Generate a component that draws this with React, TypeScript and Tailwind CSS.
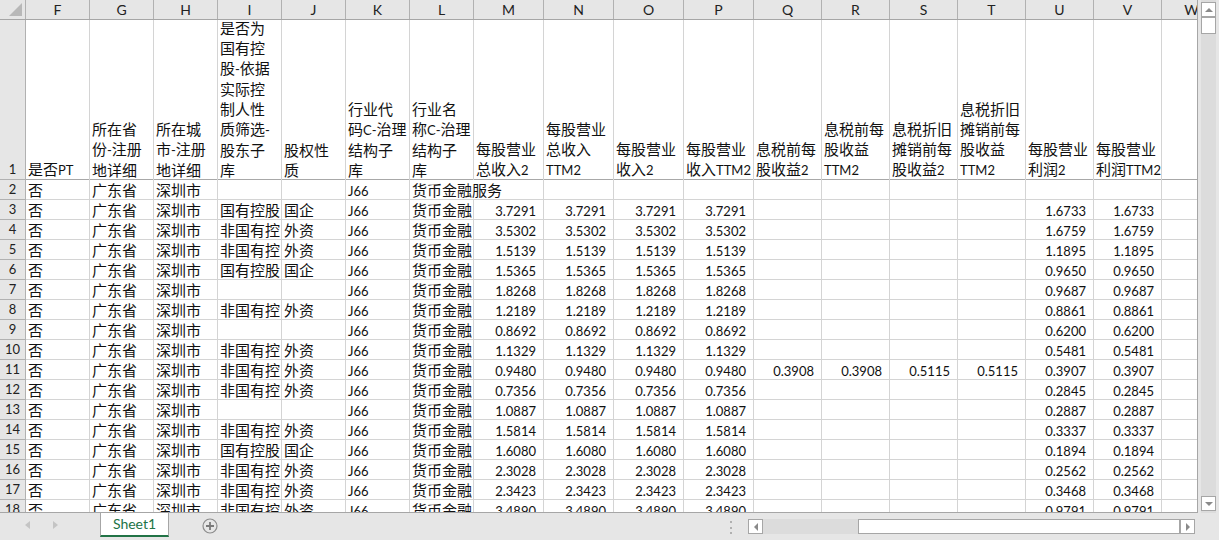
import React from 'react';

const colWidths = [64, 64, 64, 64, 64, 64, 64, 70, 70, 70, 70, 68, 68, 68, 68, 68, 68, 60];
const colNames = ['F', 'G', 'H', 'I', 'J', 'K', 'L', 'M', 'N', 'O', 'P', 'Q', 'R', 'S', 'T', 'U', 'V', 'W'];

const headers: string[][] = [
  ['是否PT'],
  ['所在省', '份-注册', '地详细'],
  ['所在城', '市-注册', '地详细'],
  ['是否为', '国有控', '股-依据', '实际控', '制人性', '质筛选-', '股东子', '库'],
  ['股权性', '质'],
  ['行业代', '码C-治理', '结构子', '库'],
  ['行业名', '称C-治理', '结构子', '库'],
  ['每股营业', '总收入2'],
  ['每股营业', '总收入', 'TTM2'],
  ['每股营业', '收入2'],
  ['每股营业', '收入TTM2'],
  ['息税前每', '股收益2'],
  ['息税前每', '股收益', 'TTM2'],
  ['息税折旧', '摊销前每', '股收益2'],
  ['息税折旧', '摊销前每', '股收益', 'TTM2'],
  ['每股营业', '利润2'],
  ['每股营业', '利润TTM2'],
  [],
];

const N = '非国有控';
const G = '国有控股';
// holder, nature, revenue, profit
const rows: [string, string, string, string][] = [
  [G, '国企', '3.7291', '1.6733'],
  [N, '外资', '3.5302', '1.6759'],
  [N, '外资', '1.5139', '1.1895'],
  [G, '国企', '1.5365', '0.9650'],
  ['', '', '1.8268', '0.9687'],
  [N, '外资', '1.2189', '0.8861'],
  ['', '', '0.8692', '0.6200'],
  [N, '外资', '1.1329', '0.5481'],
  [N, '外资', '0.9480', '0.3907'],
  [N, '外资', '0.7356', '0.2845'],
  ['', '', '1.0887', '0.2887'],
  [N, '外资', '1.5814', '0.3337'],
  [G, '国企', '1.6080', '0.1894'],
  [N, '外资', '2.3028', '0.2562'],
  [N, '外资', '2.3423', '0.3468'],
  [N, '外资', '3.4890', '0.9791'],
];

// latin runs are narrower than the CJK text in the sheet font
const Mixed = ({ text }: { text: string }) => (
  <>
    {text.split(/([A-Za-z0-9.-]+)/).map((part, i) =>
      i % 2 ? (
        <span key={i} className="text-[13px] font-['Lato',sans-serif]">
          {part}
        </span>
      ) : (
        part
      ),
    )}
  </>
);

const Cell = ({ text = '', w, num, spill }: { text?: string; w: number; num?: boolean; spill?: boolean }) => (
  <div
    style={{ width: w }}
    className={`h-5 shrink-0 whitespace-nowrap border-r border-b border-[#d4d4d4] leading-[19px] ${
      num ? 'pr-[7px] text-right' : 'pl-0.5'
    } ${spill ? 'relative z-10 overflow-visible border-r-0' : 'overflow-hidden'}`}
  >
    <Mixed text={text} />
  </div>
);

const RowHead = ({ n, h = 'h-5' }: { n: number; h?: string }) => (
  <div
    className={`${h} flex w-[26px] shrink-0 items-end justify-center border-r border-b border-[#b1b1b1] bg-[#e6e6e6] text-[13px] leading-[19px] text-[#222] font-['Lato',sans-serif]`}
  >
    {n}
  </div>
);

const DataRow = ({ n, cells }: { n: number; cells: { text?: string; num?: boolean; spill?: boolean }[] }) => (
  <div className="flex">
    <RowHead n={n} />
    {cells.map((c, i) => (
      <Cell key={i} w={colWidths[i]} {...c} />
    ))}
  </div>
);

const ArrowBtn = ({ dir }: { dir: 'up' | 'down' | 'left' | 'right' }) => {
  const pts = { up: '1,7 5,3 9,7', down: '1,3 5,7 9,3', left: '7,1 3,5 7,9', right: '3,1 7,5 3,9' }[dir];
  return (
    <div className="flex h-[15px] w-[15px] shrink-0 items-center justify-center border border-[#a6a6a6] bg-white">
      <svg width="10" height="10" viewBox="0 0 10 10">
        <polygon points={pts} fill="#8a8a8a" />
      </svg>
    </div>
  );
};

export default function App() {
  const blank4 = [{}, {}, {}, {}];
  return (
    <div className="flex h-[540px] w-[1219px] flex-col overflow-hidden bg-[#e6e6e6] text-[15px] text-[#111] font-['Noto_Sans_CJK_SC',sans-serif]">
      <div className="flex h-[513px] shrink-0 overflow-hidden">
        <div className="h-full w-[1198px] shrink-0 overflow-hidden border-r border-b border-[#a6a6a6] bg-white">
          {/* column letters */}
          <div className="flex h-5 border-b border-[#a6a6a6] bg-[#e6e6e6]">
            <div className="relative w-[26px] shrink-0 border-r border-[#b1b1b1]">
              <svg className="absolute right-[3px] bottom-[3px]" width="13" height="13" viewBox="0 0 13 13">
                <polygon points="13,0 13,13 0,13" fill="#b8b8b8" />
              </svg>
            </div>
            {colNames.map((c, i) => (
              <div
                key={c}
                style={{ width: colWidths[i] }}
                className="shrink-0 overflow-hidden border-r border-[#b1b1b1] text-center text-[14px] leading-[20px] text-[#222] font-['Lato',sans-serif]"
              >
                {c}
              </div>
            ))}
          </div>

          {/* header row */}
          <div className="flex h-[160px]">
            <RowHead n={1} h="h-[160px]" />
            {headers.map((lines, i) => (
              <div
                key={i}
                style={{ width: colWidths[i] }}
                className="flex h-[160px] shrink-0 flex-col justify-end overflow-hidden border-r border-[#d4d4d4] pl-0.5 leading-5 whitespace-nowrap shadow-[inset_0_-1px_0_#a8a8a8]"
              >
                {lines.map((l, j) => (
                  <div key={j}>
                    <Mixed text={l} />
                  </div>
                ))}
              </div>
            ))}
          </div>

          <DataRow
            n={2}
            cells={[
              { text: '否' },
              { text: '广东省' },
              { text: '深圳市' },
              {},
              {},
              { text: 'J66' },
              { text: '货币金融服务', spill: true },
              ...Array.from({ length: 11 }, () => ({})),
            ]}
          />
          {rows.map((r, i) => {
            const n = i + 3;
            const has = n === 11;
            return (
              <DataRow
                key={n}
                n={n}
                cells={[
                  { text: '否' },
                  { text: '广东省' },
                  { text: '深圳市' },
                  { text: r[0] },
                  { text: r[1] },
                  { text: 'J66' },
                  { text: '货币金融' },
                  { text: r[2], num: true },
                  { text: r[2], num: true },
                  { text: r[2], num: true },
                  { text: r[2], num: true },
                  ...(has
                    ? [
                        { text: '0.3908', num: true },
                        { text: '0.3908', num: true },
                        { text: '0.5115', num: true },
                        { text: '0.5115', num: true },
                      ]
                    : blank4),
                  { text: r[3], num: true },
                  { text: r[3], num: true },
                  {},
                ]}
              />
            );
          })}
        </div>

        {/* vertical scrollbar */}
        <div className="flex w-[21px] justify-center">
          <div className="flex h-full w-[15px] flex-col bg-[#dcdcdc] pt-0.5">
            <ArrowBtn dir="up" />
            <div className="h-[17px] w-[15px] border border-[#a6a6a6] bg-white" />
            <div className="flex-1" />
            <div className="mb-0.5">
              <ArrowBtn dir="down" />
            </div>
          </div>
        </div>
      </div>

      {/* sheet tabs and horizontal scrollbar */}
      <div className="flex h-[27px] items-start">
        <div className="flex h-6 w-[100px] shrink-0 items-center gap-[21px] pl-[25px]">
          <svg width="6" height="8" viewBox="0 0 6 8">
            <polygon points="5,0 5,8 0,4" fill="#c4c4c4" />
          </svg>
          <svg width="6" height="8" viewBox="0 0 6 8">
            <polygon points="1,0 1,8 6,4" fill="#c4c4c4" />
          </svg>
        </div>
        <div className="h-[24px] w-[69px] shrink-0 border-x border-[#a6a6a6] border-b-[2px] border-b-[#217346] bg-white text-center text-[14px] leading-[22px] text-[#217346] font-['Lato',sans-serif]">
          Sheet1
        </div>
        <div className="mt-[5px] ml-[33px] flex h-4 w-4 shrink-0 items-center justify-center">
          <svg width="16" height="16" viewBox="0 0 16 16">
            <circle cx="8" cy="8" r="7" fill="none" stroke="#8c8c8c" strokeWidth="1.2" />
            <path d="M8 4v8M4 8h8" stroke="#7a7a7a" strokeWidth="1.8" />
          </svg>
        </div>
        <div className="mt-[8px] ml-[512px] flex h-[13px] w-[3px] shrink-0 flex-col justify-between">
          <div className="h-0.5 w-0.5 bg-[#b0b0b0]" />
          <div className="h-0.5 w-0.5 bg-[#b0b0b0]" />
          <div className="h-0.5 w-0.5 bg-[#b0b0b0]" />
        </div>
        <div className="mt-[6px] ml-[15px] flex h-[15px] w-[447px] shrink-0 bg-[#dcdcdc]">
          <ArrowBtn dir="left" />
          <div className="w-[95px] shrink-0" />
          <div className="flex-1 border border-[#a6a6a6] bg-white" />
          <ArrowBtn dir="right" />
        </div>
      </div>
    </div>
  );
}
